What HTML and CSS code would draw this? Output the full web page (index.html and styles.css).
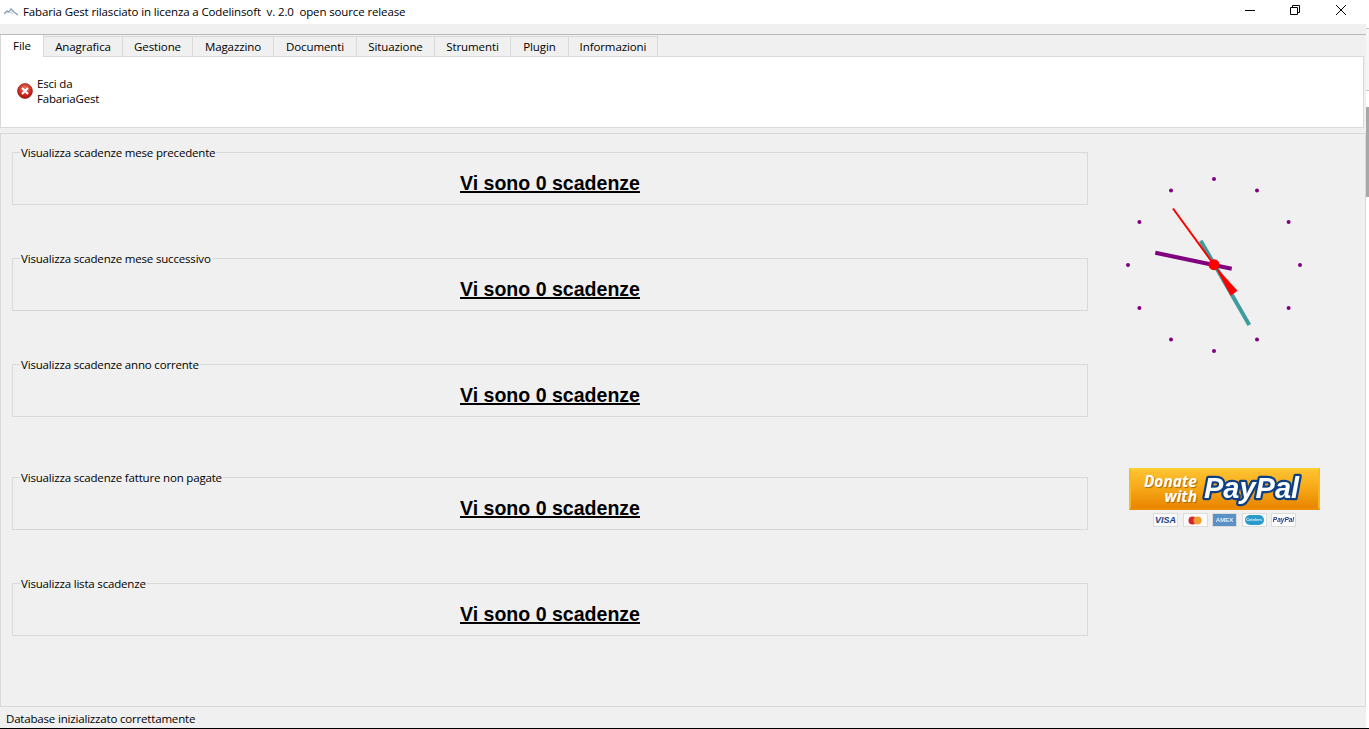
FILE: index.html
```html
<!DOCTYPE html>
<html lang="it">
<head>
<meta charset="utf-8">
<title>Fabaria Gest</title>
<link rel="stylesheet" href="styles.css">
</head>
<body>
<div class="screen">
  <div class="window">
    <header class="titlebar">
      <svg class="app-icon" width="14" height="8" viewBox="0 0 14 8"><path d="M0 6 L3 3 L5 4 L7 1 L10 4 L14 7" fill="none" stroke="#7f9db5" stroke-width="1.3"/><path d="M3 5 L6 4 L9 6" fill="none" stroke="#b9c6d0" stroke-width="1"/></svg>
      <span class="title">Fabaria Gest rilasciato in licenza a Codelinsoft&nbsp; v. 2.0&nbsp; open source release</span>
      <div class="controls">
        <svg class="ctl ctl-min" width="10" height="1" viewBox="0 0 10 1"><rect width="10" height="1" fill="#000"/></svg>
        <svg class="ctl ctl-max" width="10" height="10" viewBox="0 0 10 10"><path d="M.5 2.5h7v7h-7zM2.5 2.5v-2h7v7h-2" fill="none" stroke="#000"/></svg>
        <svg class="ctl ctl-close" width="10" height="10" viewBox="0 0 10 10"><path d="M0 0l10 10M10 0l-10 10" fill="none" stroke="#000"/></svg>
      </div>
    </header>
    <div class="band"></div>
    <nav class="tabs">
      <span class="tab active tab-file">File</span>
      <span class="tab tab-ana">Anagrafica</span>
      <span class="tab tab-ges">Gestione</span>
      <span class="tab tab-mag">Magazzino</span>
      <span class="tab tab-doc">Documenti</span>
      <span class="tab tab-sit">Situazione</span>
      <span class="tab tab-str">Strumenti</span>
      <span class="tab tab-plu">Plugin</span>
      <span class="tab tab-inf">Informazioni</span>
    </nav>
    <section class="ribbon">
      <svg class="exit-icon" width="16" height="16" viewBox="0 0 16 16">
        <defs><radialGradient id="ex" cx="50%" cy="35%" r="65%"><stop offset="0" stop-color="#f07a6a"/><stop offset=".7" stop-color="#c9241a"/><stop offset="1" stop-color="#a3140b"/></radialGradient></defs>
        <circle cx="8" cy="8" r="7.4" fill="url(#ex)" stroke="#8e2a1e" stroke-width=".8"/>
        <path d="M5 5l6 6M11 5l-6 6" stroke="#fff" stroke-width="2"/>
      </svg>
      <span class="exit-label">Esci da<br>FabariaGest</span>
    </section>
    <main class="pane">
      <div class="groups">
        <fieldset class="group"><legend>Visualizza scadenze mese precedente</legend><a class="count">Vi sono 0 scadenze</a></fieldset>
        <fieldset class="group"><legend>Visualizza scadenze mese successivo</legend><a class="count">Vi sono 0 scadenze</a></fieldset>
        <fieldset class="group"><legend>Visualizza scadenze anno corrente</legend><a class="count">Vi sono 0 scadenze</a></fieldset>
        <fieldset class="group group-far"><legend>Visualizza scadenze fatture non pagate</legend><a class="count">Vi sono 0 scadenze</a></fieldset>
        <fieldset class="group"><legend>Visualizza lista scadenze</legend><a class="count">Vi sono 0 scadenze</a></fieldset>
      </div>
      <aside class="side">
        <svg class="clock" width="200" height="190" viewBox="1115 170 200 190">
          <g fill="#800080">
            <circle cx="1214" cy="179" r="2"/><circle cx="1257" cy="190.4" r="2"/><circle cx="1288.6" cy="222" r="2"/><circle cx="1300" cy="265" r="2"/><circle cx="1288.6" cy="308" r="2"/><circle cx="1257" cy="339.6" r="2"/><circle cx="1214" cy="351" r="2"/><circle cx="1171" cy="339.6" r="2"/><circle cx="1139.4" cy="308" r="2"/><circle cx="1128" cy="265" r="2"/><circle cx="1139.4" cy="222" r="2"/><circle cx="1171" cy="190.4" r="2"/>
          </g>
          <line x1="1200.7" y1="240.7" x2="1249.3" y2="325" stroke="#3f9c9c" stroke-width="4"/>
          <line x1="1155.3" y1="252.7" x2="1231.7" y2="268.7" stroke="#800080" stroke-width="4"/>
          <line x1="1173" y1="208.5" x2="1214" y2="264.7" stroke="#f00" stroke-width="2"/>
          <polygon points="1214,264.7 1237.5,290.7 1230.7,295.7" fill="#f00"/>
          <circle cx="1214" cy="264.7" r="5.5" fill="#f00"/>
        </svg>
        <div class="donate">
          <div class="pp-button">
            <span class="pp-donate">Donate<br>with</span>
            <svg class="pp-logo" width="100" height="30" viewBox="0 0 100 30"><text class="pp-word" x="1" y="24">PayPal</text></svg>
          </div>
          <div class="cards">
            <span class="card card-visa">VISA</span>
            <span class="card"><svg width="16" height="9" viewBox="0 0 16 9"><circle cx="5.5" cy="4.5" r="4" fill="#d8232a"/><circle cx="10.5" cy="4.5" r="4" fill="#f0a030"/></svg></span>
            <span class="card card-amex">AMEX</span>
            <span class="card"><span class="ces">Cetelem</span></span>
            <span class="card card-pp">PayPal</span>
          </div>
        </div>
      </aside>
    </main>
    <footer class="status">Database inizializzato correttamente</footer>
  </div>
  <div class="edge">
    <div class="edge-a"></div>
    <div class="edge-b"></div>
    <div class="edge-thumb"></div>
  </div>
</div>
</body>
</html>
```
FILE: styles.css
```css
* { box-sizing: border-box; }
html, body { margin: 0; padding: 0; }
body { background: #f0f0f0; font-family: "Open Sans", "Noto Sans", sans-serif; font-size: 11.5px; letter-spacing: -.18px; color: #000; overflow: hidden; }
.screen { width: 1369px; height: 729px; display: flex; overflow: hidden; border-bottom: 1px solid #000; }
.window { width: 1366px; height: 728px; display: flex; flex-direction: column; background: #f0f0f0; }

.titlebar { height: 24px; background: #fff; display: flex; align-items: center; flex: none; padding-left: 4px; }
.app-icon { margin-right: 5px; flex: none; }
.title { line-height: 24px; letter-spacing: -.13px; }
.controls { margin-left: auto; display: flex; align-items: center; }
.ctl { display: block; flex: none; }
.ctl-min { margin-right: 35px; margin-top: -4px; }
.ctl-max { margin-right: 36px; margin-top: -4px; }
.ctl-close { margin-right: 20px; margin-top: -4px; }

.band { height: 11px; flex: none; border-bottom: 1px solid #b9b9b9; }

.tabs { display: flex; height: 21px; flex: none; padding-left: 1px; margin-top: 1px; margin-bottom: -1px; position: relative; z-index: 1; }
.tab { display: flex; align-items: center; justify-content: center; flex: none; height: 21px; border: 1px solid #d9d9d9; border-left: 0; padding-bottom: 1px; color: #000; letter-spacing: -.1px; }
.tab.active { background: #fff; border-bottom: 0; height: 22px; margin-top: -1px; border-top: 0; border-left: 1px solid #d9d9d9; padding-bottom: 2px; margin-left: -1px; }
.tab-file { width: 44px; }
.tab-ana { width: 79px; }
.tab-ges { width: 70px; }
.tab-mag { width: 81px; }
.tab-doc { width: 83px; }
.tab-sit { width: 78px; }
.tab-str { width: 76px; }
.tab-plu { width: 58px; }
.tab-inf { width: 89px; }

.ribbon { height: 72px; width: 1364px; flex: none; background: #fff; border: 1px solid #d9d9d9; display: flex; align-items: center; padding: 0 0 2px 16px; }
.exit-icon { flex: none; margin-right: 4px; }
.exit-label { line-height: 15px; }

.pane { flex: 1; margin-top: 5px; border: 1px solid #d9d9d9; display: flex; min-height: 0; background: #f0f0f0; }
.groups { width: 1089px; flex: none; padding: 12px 0 0 11px; display: flex; flex-direction: column; gap: 53px; }
.group { margin: 0; padding: 0; width: 1076px; height: 59px; border: 1px solid #d9d9d9; min-width: 0; text-align: center; }
.group + .group { margin-top: -6px; }
.group-far { margin-top: 1px !important; }
.group legend { padding: 0 1px; margin-left: 7px; text-align: left; line-height: 14px; height: 12px; }
.count { display: block; font-family: "Liberation Sans", Arial, sans-serif; font-weight: 700; font-size: 19.56px; letter-spacing: 0; line-height: 23px; text-decoration: underline; text-decoration-thickness: 2px; margin-top: 14px; color: #000; }

.side { flex: 1; padding: 36px 0 0 25px; display: flex; flex-direction: column; }
.clock { display: block; flex: none; }
.donate { margin-top: 108px; margin-left: 14px; width: 191px; }
.pp-button { width: 191px; height: 42px; border: 2px solid #fcd033; border-bottom-color: #ee8c04; border-left-color: #f9b820; border-right-color: #f9b820; background: linear-gradient(#fdc232 0%, #f8aa18 45%, #e88500 100%); display: flex; align-items: center; filter: blur(.35px); }
.pp-donate { width: 66px; flex: none; color: #fff; font: italic 700 15.5px/15px "Open Sans", sans-serif; letter-spacing: 0; text-align: right; text-shadow: 1px 1px 1px #a86a00; }
.pp-logo { flex: none; margin-left: 6px; overflow: visible; }
.pp-word { font: italic 700 29px "Liberation Sans", sans-serif; letter-spacing: 0; fill: #fff; stroke: #0c3f83; stroke-width: 4.5px; paint-order: stroke; stroke-linejoin: round; }
.cards { display: flex; gap: 4.5px; margin: 3px 0 0 24px; filter: blur(.3px); }
.card { width: 25px; height: 14px; background: #fbfbfb; border: 1px solid #dcdcdc; display: flex; align-items: center; justify-content: center; font: italic 700 8px/1 "Liberation Sans", sans-serif; letter-spacing: 0; color: #1a3f85; flex: none; overflow: hidden; }
.card-visa { font-size: 9px; }
.card-amex { background: #5a92c8; color: #e3eef8; font: 700 6px/1 "Liberation Sans", sans-serif; }
.card-pp { font-size: 6.5px; }
.ces { display: block; width: 19px; height: 10px; border-radius: 5px; background: #2a9ac8; color: #e6f5fb; font: 700 4px/10px "Liberation Sans", sans-serif; text-align: center; }

.status { height: 21px; flex: none; padding-left: 6px; line-height: 24px; white-space: nowrap; }

.edge { width: 3px; height: 728px; flex: none; background: #fff; display: flex; flex-direction: column; }
.edge-a { height: 29px; border-bottom: 1px solid #c8c8c8; }
.edge-b { height: 62px; background: #f6f6f6; border-bottom: 1px solid #c8c8c8; }
.edge-thumb { margin-top: 16px; height: 90px; background: #a8a8a8; }
```
